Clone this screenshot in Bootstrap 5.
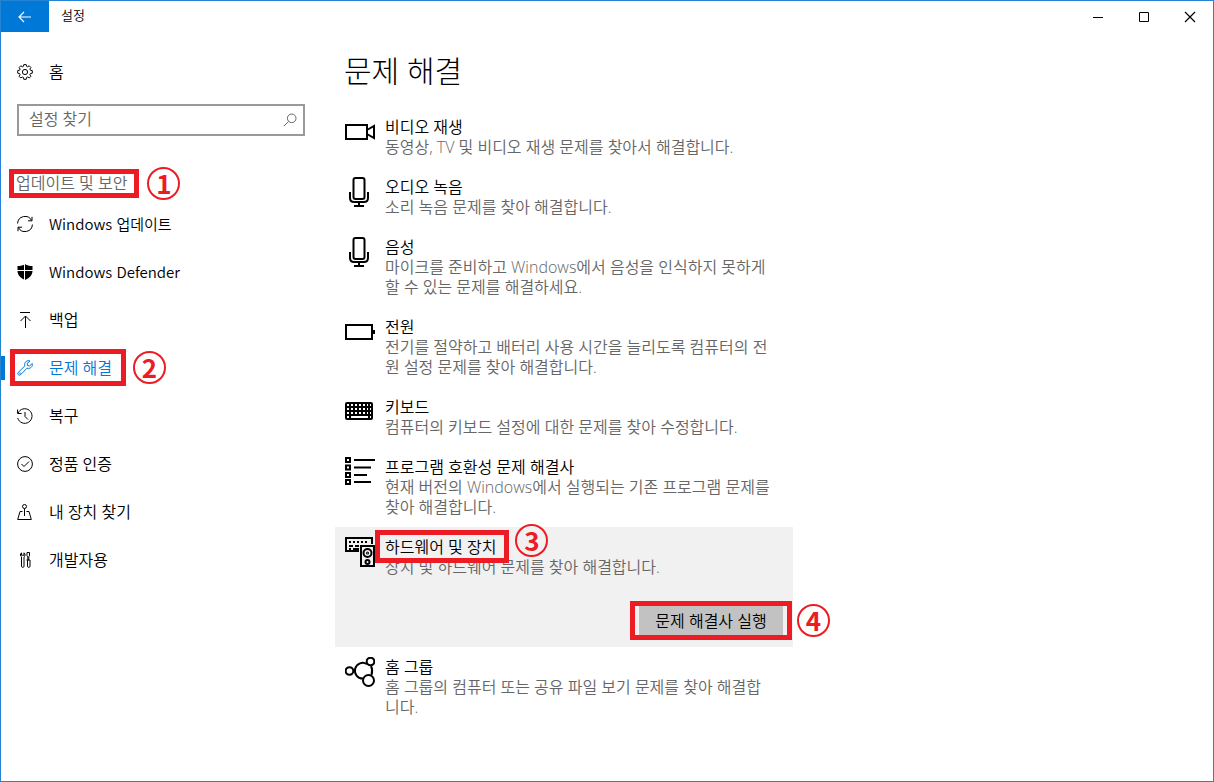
<!DOCTYPE html>
<html lang="ko">
<head>
<meta charset="utf-8">
<meta name="viewport" content="width=device-width, initial-scale=1">
<title>설정</title>
<link href="https://cdn.jsdelivr.net/npm/bootstrap@5.3.0/dist/css/bootstrap.min.css" rel="stylesheet">
<style>
:root { --accent: #0078d7; --mark: #ed1c24; }
body { font-family: "Open Sans", "Noto Sans CJK KR", sans-serif; font-size: 16px; font-weight: 350; line-height: 20px; color: #000; background: #fff; }
svg { display: block; flex: none; fill: none; stroke: currentColor; }
.window { border: 1px solid #2583d3; }
.titlebar { height: 31px; font-size: 13px; }
.app-name { padding: 0 0 3px 12px; }
.back { width: 48px; background: var(--accent); color: #fff; }
.back, .caption, .find button { border: 0; padding: 0; display: flex; align-items: center; justify-content: center; }
.caption { width: 46px; background: none; color: #000; }
.side { width: 320px; flex: none; padding-top: 16px; }
.side-link { display: flex; align-items: center; gap: 16px; height: 48px; padding-left: 16px; color: #000; text-decoration: none; }
.latin { font-family: "Noto Sans CJK KR", sans-serif; font-size: 15px; }
.side-link.active { color: var(--accent); }
.side-link.active::before { content: ""; position: absolute; left: 0; top: 12px; width: 4px; height: 24px; background: var(--accent); }
.find { margin: 8px 16px 0; height: 32px; border: 2px solid #999; }
.find input { border: 0; outline: 0; padding: 0 0 2px 10px; min-width: 0; background: none; color: #000; font-weight: inherit; }
.find input::placeholder { color: #666; opacity: 1; }
.find button { width: 26px; background: none; color: #666; }
.group-name { margin: 37px 0 7px 15px; font-size: 16px; line-height: 20px; font-weight: inherit; color: #666; }
.content { padding: 18px 16px 20px 14px; }
.content h1 { margin: 0 0 15px 9px; font-size: 30px; line-height: 42px; font-weight: 300; }
.tool-list { max-width: 458px; }
.tool { display: flex; gap: 10px; padding: 10px; }
.tool h2 { margin: 0; font-size: 16px; line-height: 20px; font-weight: inherit; }
.tool p { margin: 0; color: #666; white-space: nowrap; }
.tool.selected { background: #f1f1f1; }
.run { border: 0; width: 144px; height: 30px; background: #c2c2c2; color: #000; padding: 0; font-weight: inherit; }
.run-row { margin-top: 29px; margin-bottom: 1px; }
.frame { position: absolute; inset: -3px -12px -4px -7px; border: 5px solid var(--mark); pointer-events: none; }
.frame b { position: absolute; left: calc(100% + 13px); top: 50%; width: 33px; height: 33px; margin-top: -17px; border: 2px solid var(--mark); border-radius: 50%; color: var(--mark); font: 700 26px/27px "Noto Sans CJK KR", sans-serif; text-align: center; }
.frame-nav { inset: 5px 195px 6px 9px; }
.frame-tool { inset: -6px -13px -5px -10px; }
.frame-run { inset: -5px -9px -4px -9px; }
.frame-nav b { left: calc(100% + 12px); }
.frame-tool b { left: calc(100% + 11px); margin-top: -23px; }
.frame-run b { left: calc(100% + 10px); }
</style>
</head>
<body>
<div class="window min-vh-100">
  <header class="titlebar d-flex">
    <button class="back" type="button" aria-label="뒤로"><svg width="14" height="12" viewBox="0 0 14 12" stroke-width="1.2"><path d="M13 6H1M6 1 1 6l5 5"/></svg></button>
    <span class="app-name align-self-center me-auto">설정</span>
    <button class="caption" type="button" aria-label="최소화"><svg width="12" height="12" viewBox="0 0 12 12"><path d="M1 6.500h10"/></svg></button>
    <button class="caption" type="button" aria-label="최대화"><svg width="12" height="12" viewBox="0 0 12 12"><path d="M1.500 1.500h9v9h-9z"/></svg></button>
    <button class="caption" type="button" aria-label="닫기"><svg width="12" height="12" viewBox="0 0 12 12" stroke-width="1.200"><path d="m1 1 10 10M11 1 1 11"/></svg></button>
  </header>
  <div class="d-flex">
    <nav class="side">
      <a class="side-link" href="#"><svg width="16" height="16" viewBox="0 0 16 16"><path d="M6.800.6h2.400l.4 1.800 1 .4 1.600-1 1.700 1.700-1 1.600.5 1.100 1.900.4v2.600l-1.900.4-.5 1 1 1.700-1.700 1.700-1.600-1-1 .4-.4 1.900H6.800l-.4-1.900-1-.4-1.600 1-1.700-1.700 1-1.700-.5-1-1.900-.4V6.600l1.900-.4.5-1.100-1-1.600 1.700-1.700 1.600 1 1-.4z"/><circle cx="8" cy="8" r="2.600"/></svg>홈</a>
      <form class="find d-flex" role="search">
        <input class="flex-grow-1" type="text" placeholder="설정 찾기" aria-label="설정 찾기">
        <button type="button" aria-label="검색"><svg width="14" height="14" viewBox="0 0 14 14"><circle cx="8.700" cy="5.300" r="4.300"/><path d="M5.600 8.400.800 13.200"/></svg></button>
      </form>
      <h2 class="group-name"><span class="position-relative">업데이트 및 보안<span class="frame"><b>1</b></span></span></h2>
      <a class="side-link latin" href="#"><svg width="16" height="16" viewBox="0 0 16 16"><path d="M.6 7.500a7.400 7.400 0 0 1 14-3M15.400 8.500a7.400 7.400 0 0 1-14 3M15 .8v4h-4M1 15.200v-4h4"/></svg>Windows 업데이트</a>
      <a class="side-link latin" href="#"><svg width="16" height="16" viewBox="0 0 16 16"><path fill="#000" stroke="none" d="M8 0c2 1.500 4 2 7.500 2v5c0 4.500-3.500 7-7.500 9C4 14 .5 11.500.5 7V2C4 2 6 1.500 8 0z"/><path stroke="#fff" d="M7.500 0v16M0 6.500h16"/></svg>Windows Defender</a>
      <a class="side-link" href="#"><svg width="16" height="16" viewBox="0 0 16 16"><path d="M3 .5h10M8.500 16V4M3.500 9l5-5 5 5"/></svg>백업</a>
      <a class="side-link active position-relative" href="#" aria-current="page"><svg width="16" height="16" viewBox="0 0 16 16"><path d="M13 1C10.500 0 7.600 1.600 7.600 4.700l.2 1.300L1 12.700c-1 1.300.9 3.200 2.300 2.300L10 8.200c3.500.9 6-1.700 5.300-4.700l-2.800 2.400-2-.4-.4-2z"/><circle cx="3" cy="13.200" r=".3"/></svg>문제 해결<span class="frame frame-nav"><b>2</b></span></a>
      <a class="side-link" href="#"><svg width="16" height="16" viewBox="0 0 16 16"><path d="M1 5.200A7.300 7.300 0 1 1 .7 10M.6 1.500v4h4M8 4v4.500l3 3"/></svg>복구</a>
      <a class="side-link" href="#"><svg width="16" height="16" viewBox="0 0 16 16"><circle cx="8" cy="8" r="7.400"/><path d="m4.500 8 2.500 2.500L12 5.500"/></svg>정품 인증</a>
      <a class="side-link" href="#"><svg width="16" height="16" viewBox="0 0 16 16"><circle cx="7.500" cy="2.500" r="2"/><path d="M7.500 4.500V12M5.500 7.500H3l-2.300 8h13.600L12 7.500H9.500"/></svg>내 장치 찾기</a>
      <a class="side-link" href="#"><svg width="16" height="16" viewBox="0 0 16 16"><path d="M4.500.8c-1.500 1-1.300 3.500 0 4v9.400c0 1.600 2.500 1.600 2.500 0V4.800c1.300-.5 1.500-3 0-4v2.400H4.500zM10 .5h2.500v3.300l-.7 1v3h-1v-3l-.8-1zM9.500 8H13v6.200c0 1.600-2.500 1.600-2.500 0V8"/></svg>개발자용</a>
    </nav>
    <main class="content flex-grow-1">
      <h1>문제 해결</h1>
      <div class="tool-list">
        <section class="tool"><svg width="30" height="30" viewBox="0 0 30 30" stroke-width="2"><path d="M1 8h21v14H1zM22 13l7-4v12l-7-4"/></svg><div><h2>비디오 재생</h2><p>동영상, TV 및 비디오 재생 문제를 찾아서 해결합니다.</p></div></section>
        <section class="tool"><svg width="30" height="30" viewBox="0 0 30 30" stroke-width="2"><rect x="8.500" y="1" width="11" height="21" rx="2"/><path d="M5 15v6q0 4 4 4h10q4 0 4-4v-6M14 25v4M9 29h10"/></svg><div><h2>오디오 녹음</h2><p>소리 녹음 문제를 찾아 해결합니다.</p></div></section>
        <section class="tool"><svg width="30" height="30" viewBox="0 0 30 30" stroke-width="2"><rect x="8.500" y="1" width="11" height="21" rx="2"/><path d="M5 15v6q0 4 4 4h10q4 0 4-4v-6M14 25v4M9 29h10"/></svg><div><h2>음성</h2><p>마이크를 준비하고 Windows에서 음성을 인식하지 못하게<br>할 수 있는 문제를 해결하세요.</p></div></section>
        <section class="tool"><svg width="30" height="30" viewBox="0 0 30 30" stroke-width="2"><path d="M1 8h26v14H1z"/><path d="M29 13v4"/></svg><div><h2>전원</h2><p>전기를 절약하고 배터리 사용 시간을 늘리도록 컴퓨터의 전<br>원 설정 문제를 찾아 해결합니다.</p></div></section>
        <section class="tool"><svg width="30" height="30" viewBox="0 0 30 30" stroke-width="2"><rect x="1" y="6" width="26" height="16" rx="1"/><path d="M1 10h26M1 14h26M1 18h26M5 6v16M9 6v12M13 6v12M17 6v12M21 6v12M24 6v16"/></svg><div><h2>키보드</h2><p>컴퓨터의 키보드 설정에 대한 문제를 찾아 수정합니다.</p></div></section>
        <section class="tool"><svg width="30" height="30" viewBox="0 0 30 30" stroke-width="2"><path d="M1 1h4v4H1zM1 8.500h4v4H1zM1 16h4v4H1zM1 23h4v4H1zM9 3h21M9 10.500h17M9 18h13M9 25h17"/></svg><div><h2>프로그램 호환성 문제 해결사</h2><p>현재 버전의 Windows에서 실행되는 기존 프로그램 문제를<br>찾아 해결합니다.</p></div></section>
        <section class="tool selected"><svg width="30" height="30" viewBox="0 0 30 30" stroke-width="2"><path d="M14 14H1V1h26v6"/><path stroke-dasharray="2 2" d="M4 5h20"/><path d="M4 9h4M10 9h4M4 12h2M8 12h6M16 9h13v20H16z"/><circle cx="22.500" cy="16" r="4"/><circle cx="22.500" cy="25" r="2"/><circle cx="22.500" cy="16" r=".5"/></svg><div class="flex-grow-1"><h2><span class="position-relative">하드웨어 및 장치<span class="frame frame-tool"><b>3</b></span></span></h2><p>장치 및 하드웨어 문제를 찾아 해결합니다.</p><div class="run-row d-flex justify-content-end"><div class="position-relative"><button class="run d-block" type="button">문제 해결사 실행</button><span class="frame frame-run"><b>4</b></span></div></div></div></section>
        <section class="tool"><svg width="30" height="30" viewBox="0 0 30 30" stroke-width="2"><circle cx="4.500" cy="14" r="3.800"/><path d="M18 21.500a7.800 7.800 0 1 1 4-14.300M26 9q2 4 .5 9"/><circle cx="25.500" cy="4.500" r="3.800"/><circle cx="23.500" cy="23.500" r="5.500"/></svg><div><h2>홈 그룹</h2><p>홈 그룹의 컴퓨터 또는 공유 파일 보기 문제를 찾아 해결합<br>니다.</p></div></section>
      </div>
    </main>
  </div>
</div>
<script src="https://cdn.jsdelivr.net/npm/bootstrap@5.3.0/dist/js/bootstrap.bundle.min.js"></script>
</body>
</html>
